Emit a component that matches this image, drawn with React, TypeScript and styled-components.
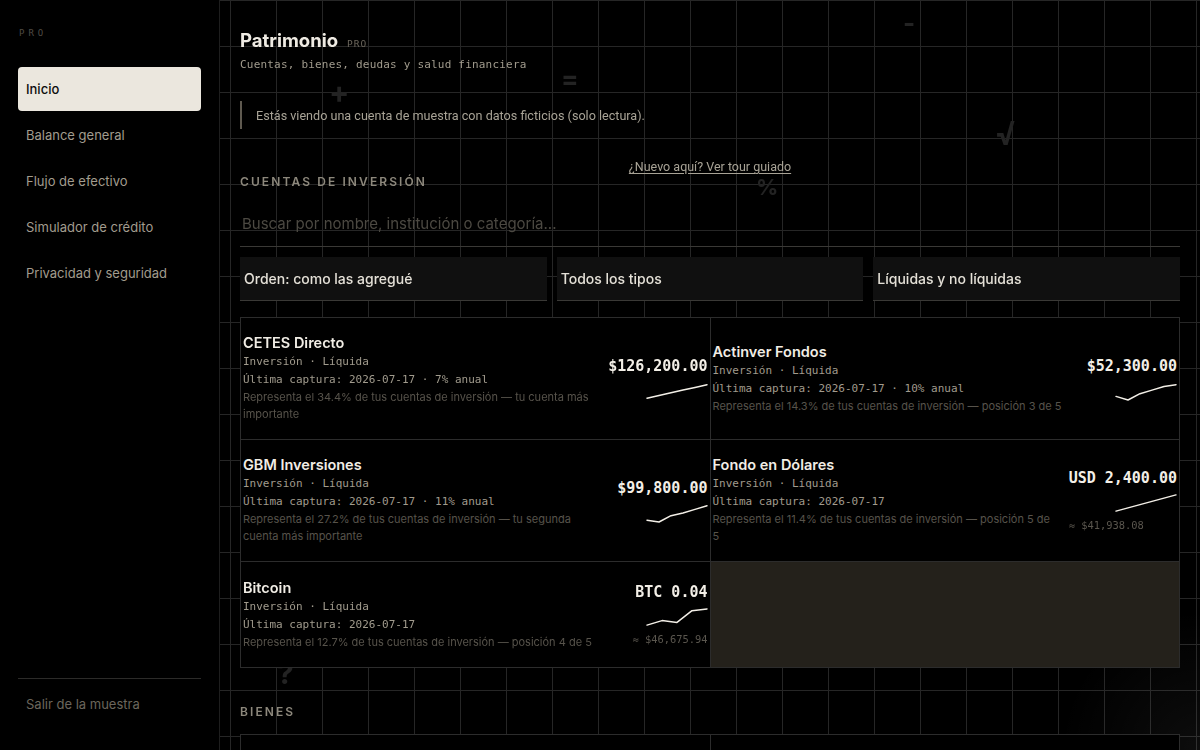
import React from "react";
import styled, { createGlobalStyle } from "styled-components";

const GlobalStyle = createGlobalStyle`
  * { box-sizing: border-box; }
  html, body { margin: 0; padding: 0; height: 100%; }
  body {
    background-color: #000;
    background-image:
      radial-gradient(circle at 1200px 750px, rgba(255,255,255,0.05), rgba(255,255,255,0) 140px),
      linear-gradient(to right, #262626 1px, transparent 1px),
      linear-gradient(to bottom, #262626 1px, transparent 1px);
    background-size: 100% 100%, 46px 46px, 46px 46px;
    background-attachment: fixed;
    font-family: Inter, "Noto Sans", sans-serif;
    overflow: hidden;
  }
`;

const mono = `"DejaVu Sans Mono", "Liberation Mono", monospace`;

const Shell = styled.div`
  display: flex;
  height: 750px;
  position: relative;
`;

const Sidebar = styled.aside`
  width: 220px;
  flex: none;
  background: #000;
  border-right: 1px solid #1e1e1e;
  display: flex;
  flex-direction: column;
  padding: 28px 18px 37px 18px;
  position: relative;
  z-index: 2;
`;

const Brand = styled.div`
  font-family: ${mono};
  font-size: 9px;
  line-height: 11px;
  letter-spacing: 4px;
  color: #4f4b44;
  padding-left: 1px;
`;

const Nav = styled.nav`
  display: flex;
  flex-direction: column;
  gap: 2px;
  margin-top: 28px;
`;

const NavItem = styled.a<{ $active?: boolean }>`
  display: flex;
  align-items: center;
  height: 44px;
  padding: 0 8px;
  border-radius: 4px;
  font-size: 13px;
  font-weight: ${(p) => (p.$active ? 500 : 400)};
  color: ${(p) => (p.$active ? "#0d0d0d" : "#a29c8e")};
  background: ${(p) => (p.$active ? "#ebe7de" : "transparent")};
  text-decoration: none;
  cursor: pointer;
`;

const SideFooter = styled.div`
  margin-top: auto;
  border-top: 1px solid #2c2b29;
  padding: 16px 8px 0;
`;

const ExitLink = styled.a`
  display: block;
  font-size: 13px;
  line-height: 18px;
  color: #6b665c;
  cursor: pointer;
`;

const Decor = styled.div`
  position: fixed;
  inset: 0;
  pointer-events: none;
  z-index: 0;
`;

const Glyph = styled.span<{ $size: number }>`
  position: absolute;
  font-family: Inter, sans-serif;
  font-weight: 700;
  font-size: ${(p) => p.$size}px;
  line-height: 1;
  color: #232323;
`;

const Main = styled.main`
  flex: 1;
  padding: 28px 20px 0 20px;
  position: relative;
  z-index: 1;
  overflow: hidden;
`;

const TitleRow = styled.div`
  display: flex;
  align-items: baseline;
  gap: 9px;
`;

const Title = styled.h1`
  margin: 0;
  font-size: 18.5px;
  line-height: 24px;
  font-weight: 700;
  color: #efebe3;
`;

const TitleTag = styled.span`
  font-family: ${mono};
  font-size: 9.5px;
  letter-spacing: 1px;
  color: #6b665c;
`;

const Subtitle = styled.p`
  margin: 5px 0 0;
  font-family: ${mono};
  font-size: 11px;
  letter-spacing: 0.2px;
  line-height: 16px;
  color: #a19b8d;
`;

const Notice = styled.div`
  margin-top: 28px;
  border-left: 2px solid #5f5a50;
  padding-left: 14px;
  height: 28px;
  display: flex;
  align-items: center;
  font-family: Roboto, sans-serif;
  font-size: 12.6px;
  color: #a8a396;
`;

const TourRow = styled.div`
  margin-top: 28px;
  text-align: center;
  line-height: 16px;
`;

const TourLink = styled.a`
  font-family: Roboto, sans-serif;
  font-size: 12.5px;
  color: #a8a396;
  text-decoration: underline;
  text-underline-offset: 2px;
  cursor: pointer;
`;

const SectionTitle = styled.h2<{ $top: number }>`
  margin: ${(p) => p.$top}px 0 0;
  font-size: 12px;
  line-height: 12px;
  font-weight: 600;
  letter-spacing: 2.1px;
  color: #8d887c;
  text-transform: uppercase;
`;

const Search = styled.input`
  display: block;
  width: 100%;
  margin-top: 18px;
  height: 41px;
  padding: 0 2px 6px;
  background: transparent;
  border: none;
  border-bottom: 1px solid #3a3936;
  color: #ddd;
  font-family: Inter, sans-serif;
  font-size: 15px;
  outline: none;
  &::placeholder { color: #4c4942; }
`;

const Filters = styled.div`
  display: grid;
  grid-template-columns: repeat(3, 1fr);
  gap: 10px;
  margin-top: 10px;
`;

const Filter = styled.div`
  height: 44px;
  background: #101010;
  border-bottom: 1px solid #3a3936;
  display: flex;
  align-items: center;
  padding: 0 4px;
  font-size: 14px;
  font-weight: 500;
  color: #e4e0d7;
`;

const CardGrid = styled.div<{ $top: number }>`
  display: grid;
  grid-template-columns: 1fr 1fr;
  margin-top: ${(p) => p.$top}px;
  border-top: 1px solid #2c2c2c;
  border-left: 1px solid #2c2c2c;
`;

const Card = styled.div`
  background: #000;
  border-right: 1px solid #2c2c2c;
  border-bottom: 1px solid #2c2c2c;
  padding: 15px 2px 16px;
  display: flex;
  align-items: center;
  gap: 16px;
  min-height: 106px;
`;

const Filler = styled.div`
  background: #24211b;
  border-right: 1px solid #2c2c2c;
  border-bottom: 1px solid #2c2c2c;
`;

const CardInfo = styled.div`
  flex: 1;
  min-width: 0;
`;

const CardName = styled.div`
  font-size: 14.5px;
  line-height: 20px;
  font-weight: 600;
  color: #f1ede5;
`;

const Meta = styled.div`
  font-family: ${mono};
  font-size: 11px;
  line-height: 18px;
  color: #a19b8d;
`;

const Desc = styled.div`
  font-size: 11px;
  line-height: 17px;
  color: #57534b;
`;

const CardValue = styled.div`
  flex: none;
  display: flex;
  flex-direction: column;
  align-items: flex-end;
`;

const Amount = styled.div`
  font-family: ${mono};
  font-size: 15px;
  line-height: 20px;
  font-weight: 700;
  color: #f3efe7;
`;

const Spark = styled.svg`
  display: block;
  margin-top: 5px;
`;

const Approx = styled.div`
  align-self: flex-start;
  margin-top: 5px;
  font-family: ${mono};
  font-size: 10.4px;
  line-height: 14px;
  color: #5a564e;
`;

type Account = {
  name: string;
  rate?: string;
  desc: string;
  amount: string;
  approx?: string;
  points: number[];
};

const accounts: Account[] = [
  {
    name: "CETES Directo",
    rate: "7% anual",
    desc: "Representa el 34.4% de tus cuentas de inversión — tu cuenta más importante",
    amount: "$126,200.00",
    points: [2, 5, 8, 11, 14, 17],
  },
  {
    name: "Actinver Fondos",
    rate: "10% anual",
    desc: "Representa el 14.3% de tus cuentas de inversión — posición 3 de 5",
    amount: "$52,300.00",
    points: [4, 0, 7, 11, 15, 17],
  },
  {
    name: "GBM Inversiones",
    rate: "11% anual",
    desc: "Representa el 27.2% de tus cuentas de inversión — tu segunda cuenta más importante",
    amount: "$99,800.00",
    points: [2, 0, 7, 10, 14, 18],
  },
  {
    name: "Fondo en Dólares",
    desc: "Representa el 11.4% de tus cuentas de inversión — posición 5 de 5",
    amount: "USD 2,400.00",
    approx: "≈ $41,938.08",
    points: [1, 4.6, 8.2, 11.8, 15.4, 19],
  },
  {
    name: "Bitcoin",
    desc: "Representa el 12.7% de tus cuentas de inversión — posición 4 de 5",
    amount: "BTC 0.04",
    approx: "≈ $46,675.94",
    points: [1, 6, 4, 17, 19],
  },
];

function Sparkline({ points }: { points: number[] }) {
  const w = 62;
  const h = 20;
  const max = 20;
  const step = (w - 2) / (points.length - 1);
  const pts = points
    .map((v, i) => `${(1 + i * step).toFixed(1)},${(h - 1 - (v / max) * (h - 2)).toFixed(1)}`)
    .join(" ");
  return (
    <Spark width={w} height={h} viewBox={`0 0 ${w} ${h}`}>
      <polyline points={pts} fill="none" stroke="#f3efe7" strokeWidth="1.5" strokeLinejoin="round" strokeLinecap="round" />
    </Spark>
  );
}

const navItems = [
  "Inicio",
  "Balance general",
  "Flujo de efectivo",
  "Simulador de crédito",
  "Privacidad y seguridad",
];

export default function App() {
  return (
    <>
      <GlobalStyle />
      <Decor aria-hidden="true">
        <Glyph $size={30} style={{ left: 329, top: 77 }}>+</Glyph>
        <Glyph $size={26} style={{ left: 561, top: 66 }}>=</Glyph>
        <Glyph $size={26} style={{ left: 903, top: 10 }}>-</Glyph>
        <Glyph $size={32} style={{ left: 995, top: 118 }}>√</Glyph>
        <Glyph $size={22} style={{ left: 756, top: 176 }}>%</Glyph>
        <Glyph $size={30} style={{ left: 277, top: 658 }}>?</Glyph>
      </Decor>
      <Shell>
        <Sidebar>
          <Brand>PRO</Brand>
          <Nav>
            {navItems.map((item, i) => (
              <NavItem key={item} $active={i === 0}>
                {item}
              </NavItem>
            ))}
          </Nav>
          <SideFooter>
            <ExitLink>Salir de la muestra</ExitLink>
          </SideFooter>
        </Sidebar>
        <Main>
          <TitleRow>
            <Title>Patrimonio</Title>
            <TitleTag>PRO</TitleTag>
          </TitleRow>
          <Subtitle>Cuentas, bienes, deudas y salud financiera</Subtitle>
          <Notice>Estás viendo una cuenta de muestra con datos ficticios (solo lectura).</Notice>
          <TourRow>
            <TourLink>¿Nuevo aquí? Ver tour guiado</TourLink>
          </TourRow>
          <SectionTitle $top={1}>Cuentas de inversión</SectionTitle>
          <Search placeholder="Buscar por nombre, institución o categoría..." />
          <Filters>
            <Filter>Orden: como las agregué</Filter>
            <Filter>Todos los tipos</Filter>
            <Filter>Líquidas y no líquidas</Filter>
          </Filters>
          <CardGrid $top={16}>
            {accounts.map((a) => (
              <Card key={a.name}>
                <CardInfo>
                  <CardName>{a.name}</CardName>
                  <Meta>Inversión · Líquida</Meta>
                  <Meta>
                    Última captura: 2026-07-17{a.rate ? ` · ${a.rate}` : ""}
                  </Meta>
                  <Desc>{a.desc}</Desc>
                </CardInfo>
                <CardValue>
                  <Amount>{a.amount}</Amount>
                  <Sparkline points={a.points} />
                  {a.approx && <Approx>{a.approx}</Approx>}
                </CardValue>
              </Card>
            ))}
            <Filler />
          </CardGrid>
          <SectionTitle $top={38}>Bienes</SectionTitle>
          <CardGrid $top={16}>
            <Card />
            <Card />
          </CardGrid>
        </Main>
      </Shell>
    </>
  );
}
